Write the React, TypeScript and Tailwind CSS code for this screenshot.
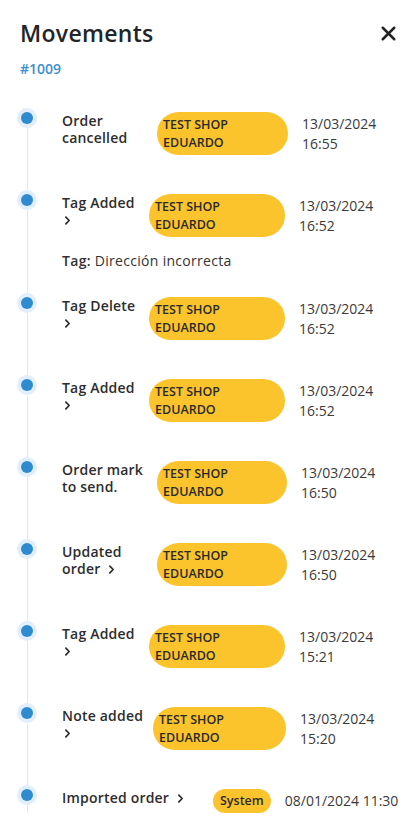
import React from 'react';
import { X } from 'lucide-react';

type Movement = {
  title: string;
  chevron?: 'inline' | 'break';
  user: string;
  date: string;
  time?: string;
  titleW: number;
  pillW: number;
  tag?: string;
};

const movements: Movement[] = [
  { title: 'Order cancelled', user: 'TEST SHOP EDUARDO', date: '13/03/2024', time: '16:55', titleW: 87, pillW: 131 },
  { title: 'Tag Added', chevron: 'break', user: 'TEST SHOP EDUARDO', date: '13/03/2024', time: '16:52', titleW: 79, pillW: 136, tag: 'Dirección incorrecta' },
  { title: 'Tag Delete', chevron: 'break', user: 'TEST SHOP EDUARDO', date: '13/03/2024', time: '16:52', titleW: 79, pillW: 136 },
  { title: 'Tag Added', chevron: 'break', user: 'TEST SHOP EDUARDO', date: '13/03/2024', time: '16:52', titleW: 79, pillW: 136 },
  { title: 'Order mark to send.', user: 'TEST SHOP EDUARDO', date: '13/03/2024', time: '16:50', titleW: 87, pillW: 130 },
  { title: 'Updated order', chevron: 'inline', user: 'TEST SHOP EDUARDO', date: '13/03/2024', time: '16:50', titleW: 87, pillW: 130 },
  { title: 'Tag Added', chevron: 'break', user: 'TEST SHOP EDUARDO', date: '13/03/2024', time: '15:21', titleW: 79, pillW: 136 },
  { title: 'Note added', chevron: 'break', user: 'TEST SHOP EDUARDO', date: '13/03/2024', time: '15:20', titleW: 83, pillW: 133 },
];

const Chevron = ({ className }: { className?: string }) => (
  <svg viewBox="0 0 10 10" className={className} fill="none" stroke="#2d2d2d" strokeWidth="1.6" strokeLinecap="round" strokeLinejoin="round">
    <path d="M3.5 2 L6.5 5 L3.5 8" />
  </svg>
);

const Dot = () => (
  <div className="flex w-5 shrink-0 flex-col items-center">
    <div className="flex h-5 w-5 items-center justify-center rounded-full bg-[#e2eef9]">
      <div className="h-3 w-3 rounded-full bg-[#2f8bd0]" />
    </div>
    <div className="w-px flex-1 bg-[#e3e6ee]" />
  </div>
);

const Row = ({ m }: { m: Movement }) => (
  <div className="flex">
    <Dot />
    <div className={`ml-[25px] pt-1 ${m.tag ? 'pb-[20px]' : 'pb-[35px]'}`}>
      <div className="flex items-start">
        <div
          className="text-[14px] font-semibold leading-[17px] tracking-[0.2px] text-[#2d2d2d]"
          style={{ width: m.titleW }}
        >
          {m.title}
          {m.chevron === 'inline' && <Chevron className="ml-1.5 inline-block h-[11px] w-[11px] align-[-1px]" />}
          {m.chevron === 'break' && <Chevron className="mt-[4px] block h-[11px] w-[11px]" />}
        </div>
        <div
          className="ml-2 flex h-[43px] shrink-0 flex-col justify-center rounded-full bg-[#fcc42c] pl-[6px] text-[12.5px] font-semibold uppercase leading-[18px] text-[#2a2a2a]"
          style={{ width: m.pillW }}
        >
          <span>TEST SHOP</span>
          <span>EDUARDO</span>
        </div>
        <div className="ml-[14px] mt-[2px] text-[14px] leading-[20px] text-[#3a3a3a]">
          <div>{m.date}</div>
          <div>{m.time}</div>
        </div>
      </div>
      {m.tag && (
        <div className="mt-[12px] text-[14px] leading-[24px] tracking-[0.3px] text-[#333]">
          <span className="font-semibold">Tag:</span> {m.tag}
        </div>
      )}
    </div>
  </div>
);

export default function App() {
  return (
    <div className="min-h-screen bg-white font-['Open_Sans',sans-serif]">
      <div className="flex items-center justify-between pl-5 pr-4 pt-[19px]">
        <h1 className="text-[23px] font-semibold leading-[28px] tracking-[0.3px] text-[#212529]">Movements</h1>
        <X size={23} strokeWidth={2.6} className="text-[#222]" />
      </div>
      <div className="mt-3 px-5 text-[14px] font-semibold leading-[20px] text-[#3a8fd2]">#1009</div>

      <div className="mt-[29px] pl-[17px]">
        {movements.map((m, i) => (
          <Row key={i} m={m} />
        ))}
        <div className="flex">
          <Dot />
          <div className="ml-[25px] flex items-start pt-1">
            <div className="w-[151px] text-[14px] font-semibold leading-[17px] tracking-[0.2px] text-[#2d2d2d]">
              Imported order
              <Chevron className="ml-1.5 inline-block h-[11px] w-[11px] align-[-1px]" />
            </div>
            <div className="rounded-full bg-[#fcc42c] px-[7px] text-[12.5px] font-semibold leading-[24px] text-[#2a2a2a]">
              System
            </div>
            <div className="ml-[14px] mt-[2px] text-[14px] leading-[20px] text-[#3a3a3a]">08/01/2024 11:30</div>
          </div>
        </div>
      </div>
    </div>
  );
}
